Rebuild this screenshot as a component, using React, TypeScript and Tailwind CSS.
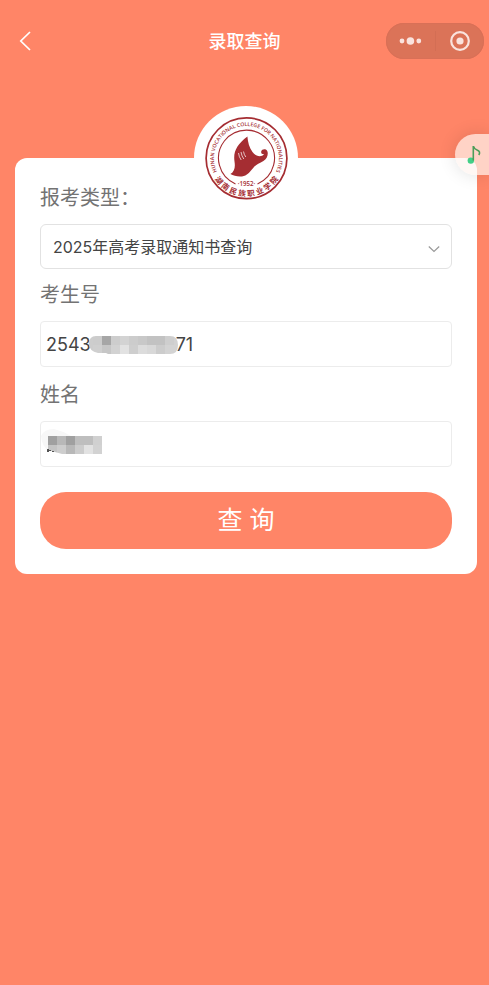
import React, { useState } from "react";

const EXAM_MASK = [
  ["#cccccc", "#a6a6a6", "#cdcdcd", "#d3d3d3", "#cccccc", "#c8c8c8", "#c2c2c2", "#c2c2c2", "#cecece", "#d2d2d2"],
  ["#cfcfcf", "#c6c6c6", "#d2d2d2", "#e2e2e2", "#cecece", "#dcdcdc", "#d8d8d8", "#cccccc", "#d3d3d3", "#d3d3d3"],
];

const NAME_MASK = [
  ["#a0a0a0", "#b8b8b8", "#a0a0a0", "#bebebe", "#bebebe", "#d0d0d0"],
  ["#c4c4c4", "#cdcdcd", "#b8b8b8", "#cccccc", "#e2e2e2", "#d2d2d2"],
];

const SCHOOL_NAME = ["湖", "南", "民", "族", "职", "业", "学", "院"];

function Mosaic({ rows, offset }: { rows: string[][]; offset: number }) {
  return (
    <>
      {rows.map((row, y) =>
        row.map((fill, x) => (
          <rect key={`${x}-${y}`} x={offset + x * 9} y={y * 9} width="9" height="9" fill={fill} shapeRendering="crispEdges" />
        )),
      )}
    </>
  );
}

function Emblem() {
  return (
    <svg viewBox="0 0 104 104" className="h-full w-full" role="img" aria-label="Hunan Vocational College for Nationalities">
      <defs>
        <path id="ring-top" d="M27 72.3 A32.4 32.4 0 1 1 78 72.3" />
      </defs>
      <circle cx="52.5" cy="52.3" r="40.4" fill="none" stroke="#a52d32" strokeWidth="1.7" />
      <path d="M41.5 77.9 A28 28 0 1 1 63.5 77.9" fill="none" stroke="#a52d32" strokeWidth="1.1" />
      <g fill="#a52d32" fontFamily="'Open Sans', 'Noto Sans', sans-serif" fontWeight="600">
        <text fontSize="5.2">
          <textPath href="#ring-top" startOffset="50%" textAnchor="middle">
            HUNAN VOCATIONAL COLLEGE FOR NATIONALITIES
          </textPath>
        </text>
        <text x="52.5" y="79.6" fontSize="6.2" textAnchor="middle">·1952·</text>
      </g>
      <g fill="#a52d32" fontFamily="'Noto Sans CJK SC', sans-serif" fontSize="7.6" fontWeight="700" textAnchor="middle">
        {SCHOOL_NAME.map((char, i) => (
          <text key={char} x="52.5" y="90.3" transform={`rotate(${(3.5 - i) * 14.6} 52.5 52.3)`}>
            {char}
          </text>
        ))}
      </g>
      <path
        d="M53.4 30.5 C53.8 36 55.3 41.5 58.5 46 C61 50 66.8 51.8 70.3 48.3 C68.2 48.7 66.9 47.4 67.2 45.6 C67.8 43 71.5 42.6 73.1 44.7 C74.7 47.4 73.4 52.6 69.4 55.1 C65.5 57.4 62 58.6 59.4 61.7 C55.8 66 53 69.7 48 70.4 C43.3 70.9 39.5 69.5 36.4 68 C40.6 65.5 41.4 61 40.5 55.5 C39.1 46 42.7 38.5 53.4 30.5 Z"
        fill="#a52d32"
      />
      <path d="M44.5 47 Q45 51 47.2 54 M47 46 Q47.6 50 49.8 53 M49.5 45.5 Q50 48.5 51.8 51" fill="none" stroke="#fff" strokeWidth=".7" />
    </svg>
  );
}

const labelClass = "block text-xl leading-7 text-[#737373]";
const fieldClass = "h-[46px] w-full rounded-sm border border-[#ececec] bg-white px-[5px] text-lg text-[#444] outline-none";

export default function App() {
  const [examNo, setExamNo] = useState("2543\u2007\u2007\u2007\u2007\u2007\u2007\u2007\u200971");
  const [name, setName] = useState("");

  return (
    <div className="relative min-h-screen overflow-hidden bg-[#ff8567] font-['Inter','Noto_Sans_CJK_SC',sans-serif]">
      <header className="grid h-[82px] grid-cols-[1fr_auto_1fr] items-center px-[5px]">
        <button type="button" aria-label="返回" className="flex h-9 w-9 items-center justify-center">
          <svg width="18" height="22" viewBox="0 0 18 22" fill="none" stroke="#fff" strokeWidth="1.7">
            <path d="M16 2 L6.8 11 L16 20" />
          </svg>
        </button>
        <h1 className="pt-px text-lg font-medium text-white">录取查询</h1>
        <div className="flex h-9 w-[98px] items-center justify-self-end rounded-full bg-[#db7358] ring-1 ring-inset ring-[#d97057]">
          <button type="button" aria-label="更多" className="flex h-full flex-1 items-center justify-center">
            <svg width="24" height="12" viewBox="0 0 24 12" fill="#fae3de">
              <circle cx="4" cy="6" r="2.4" />
              <circle cx="12.4" cy="6" r="3.8" />
              <circle cx="20.8" cy="6" r="2.4" />
            </svg>
          </button>
          <span className="h-5 w-px bg-[#d36e54]" />
          <button type="button" aria-label="关闭" className="flex h-full flex-1 items-center justify-center">
            <svg width="22" height="22" viewBox="0 0 22 22">
              <circle cx="11" cy="11" r="8.8" fill="none" stroke="#fae3de" strokeWidth="2.2" />
              <circle cx="11" cy="11" r="3.6" fill="#fae3de" />
            </svg>
          </button>
        </div>
      </header>

      <main className="pb-8 pl-[15px] pr-3 pt-[76px]">
        <form className="relative rounded-xl bg-white px-[25px] pb-[25px] pt-[26px]" onSubmit={(e) => e.preventDefault()}>
          <div className="absolute -top-[52px] left-1/2 h-[104px] w-[104px] -translate-x-1/2 rounded-full bg-white">
            <Emblem />
          </div>

          <label htmlFor="kind" className={labelClass}>报考类型：</label>
          <div className="relative mt-3">
            <select
              id="kind"
              className="block h-[45px] w-full appearance-none rounded-md border border-[#e2e2e2] bg-white pl-3 pr-9 text-base text-[#444] outline-none"
            >
              <option>2025年高考录取通知书查询</option>
            </select>
            <svg
              className="pointer-events-none absolute right-3 top-5"
              width="12"
              height="10"
              viewBox="0 0 12 10"
              fill="none"
              stroke="#999"
              strokeWidth="1.2"
            >
              <path d="M.8 2.5 L6 7.5 L11.2 2.5" />
            </svg>
          </div>

          <label htmlFor="exam" className={`${labelClass} mt-3`}>考生号</label>
          <div className="relative mt-3">
            <input id="exam" className={fieldClass} value={examNo} onChange={(e) => setExamNo(e.target.value)} />
            <svg className="pointer-events-none absolute left-[49px] top-[15px]" width="89" height="18" viewBox="0 0 89 18">
              <defs>
                <clipPath id="exam-clip">
                  <path d="M7 0 H81 Q89 0 89 9 Q89 18 81 18 H19 L17 17 H9 Q0 15 0 8 Q0 0 7 0 Z" />
                </clipPath>
              </defs>
              <g clipPath="url(#exam-clip)">
                <Mosaic rows={EXAM_MASK} offset={4} />
                <rect width="4" height="18" fill="#cdcdcd" />
              </g>
            </svg>
          </div>

          <label htmlFor="name" className={`${labelClass} mt-[14px]`}>姓名</label>
          <div className="relative mt-3">
            <input id="name" className={fieldClass} value={name} onChange={(e) => setName(e.target.value)} />
            <svg className="pointer-events-none absolute left-px top-2" width="62" height="26" viewBox="0 0 62 26">
              <path d="M0 7 Q3 0 13 0 Q22 2 30 7 V24 Q20 25 8 22 Q1 18 0 7 Z" fill="#f7f7f7" />
              <clipPath id="name-clip">
                <path d="M0 0 H54 V18 H14 L0 14 Z" />
              </clipPath>
              <g transform="translate(7 7)" clipPath="url(#name-clip)">
                <Mosaic rows={NAME_MASK} offset={0} />
              </g>
              <path d="M6 20 H8 V21 H10 V22 H8 V23 H6 Z M11 22 H13 V23 H11 Z" fill="#555" />
            </svg>
          </div>

          <button type="submit" className="mt-[25px] h-[57px] w-full rounded-[26px] bg-[#ff8567] pt-px text-[25px] text-white">
            查 询
          </button>
        </form>
      </main>

      <button
        type="button"
        aria-label="音乐"
        className="absolute right-0 top-[134px] flex h-[41px] w-[34px] items-center rounded-l-full bg-[#fff3f0]/70 pl-3 shadow-[0_0_18px_rgba(0,0,0,0.12)]"
      >
        <svg width="15" height="20" viewBox="0 0 15 20">
          <circle cx="3.8" cy="15.6" r="3.2" fill="#43cf87" />
          <path d="M6.3 1 V15.5" stroke="#4b9d59" strokeWidth="1.6" fill="none" />
          <path d="M6.5 1.5 Q7.5 4.2 10 5 Q14 6.5 11.8 10" stroke="#4b9d59" strokeWidth="1.6" fill="none" />
        </svg>
      </button>
    </div>
  );
}
